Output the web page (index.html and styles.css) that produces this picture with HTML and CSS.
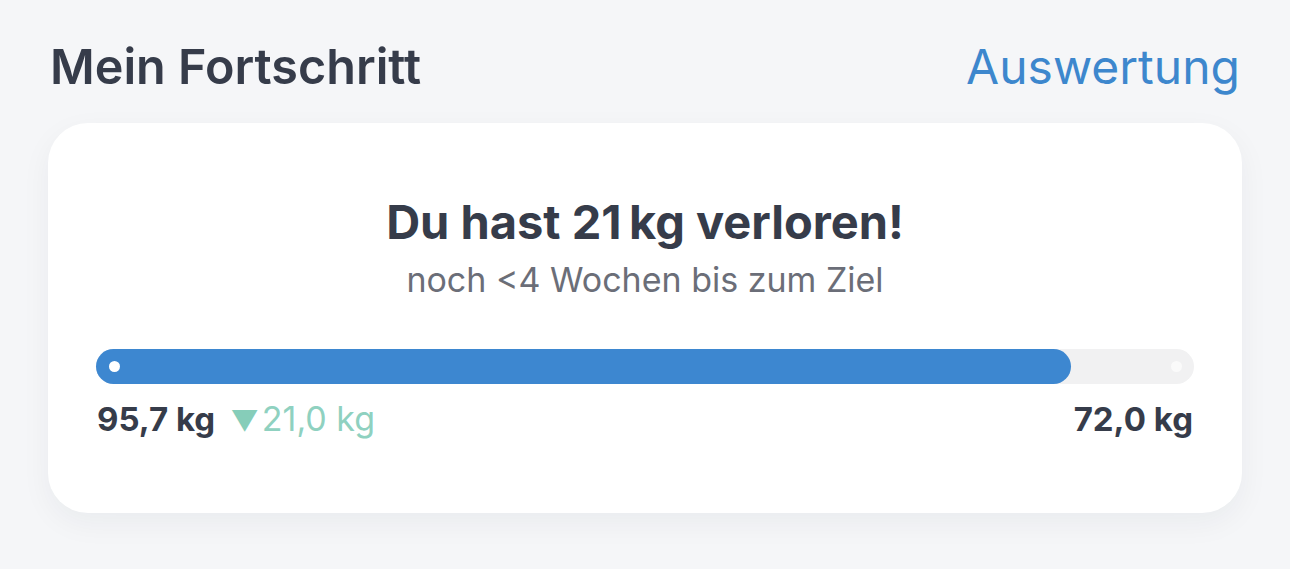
FILE: index.html
```html
<!DOCTYPE html>
<html lang="de">
<head>
  <meta charset="UTF-8">
  <meta name="viewport" content="width=device-width, initial-scale=1.0">
  <title>Mein Fortschritt</title>
  <link rel="stylesheet" href="styles.css">
</head>
<body>

  <div class="page">
    <div class="section-head">
      <h1>Mein Fortschritt</h1>
      <a class="link" href="#">Auswertung</a>
    </div>

    <div class="card">
      <h2>Du hast 21&#8239;kg verloren!</h2>
      <p class="subtitle">noch &lt;4 Wochen bis zum Ziel</p>

      <div class="progress">
        <div class="progress-fill" style="width: 88.8%;">
          <span class="dot"></span>
        </div>
        <span class="dot dot-end"></span>
      </div>

      <div class="labels">
        <div class="start">
          <strong>95,7 kg</strong>
          <span class="delta"><span class="tri">&#9660;</span>21,0 kg</span>
        </div>
        <strong>72,0 kg</strong>
      </div>
    </div>
  </div>

</body>
</html>
```

FILE: styles.css
```css
body {
  margin: 0;
  background: #f5f6f8;
  font-family: 'Inter', 'Open Sans', sans-serif;
  color: #363c4a;
}

.page {
  padding: 38px 48px 57px;
}

.section-head {
  display: flex;
  justify-content: space-between;
  align-items: center;
  padding: 0 2px;
}

h1 {
  margin: 0;
  font-size: 48.5px;
  line-height: 58px;
  font-weight: 600;
  color: #363c4a;
}

.link {
  font-size: 48px;
  line-height: 58px;
  color: #3d87cd;
  text-decoration: none;
}

.card {
  margin-top: 27px;
  background: white;
  border-radius: 40px;
  box-shadow: 0 10px 30px rgba(20, 30, 50, 0.05);
  padding: 71px 48px 70px;
  text-align: center;
}

h2 {
  margin: 0;
  font-size: 47px;
  line-height: 56px;
  font-weight: 700;
  color: #363c4a;
}

.subtitle {
  margin: 9px 0 0;
  font-size: 34px;
  line-height: 42px;
  color: #6b6e78;
}

.progress {
  position: relative;
  margin-top: 48px;
  height: 35px;
  border-radius: 18px;
  background: #f1f1f2;
}

.progress-fill {
  position: relative;
  height: 100%;
  border-radius: 18px;
  background: #3d87d0;
}

.dot {
  position: absolute;
  left: 13px;
  top: 12px;
  width: 11px;
  height: 11px;
  border-radius: 50%;
  background: white;
}

.dot-end {
  left: auto;
  right: 12px;
  background: #fafafa;
}

.labels {
  display: flex;
  justify-content: space-between;
  align-items: baseline;
  margin-top: 13px;
  font-size: 33px;
  line-height: 44px;
  padding: 0 1px;
}

.labels strong {
  font-weight: 700;
  color: #363c4a;
}

.delta {
  margin-left: 6px;
  font-size: 34px;
  color: #8fd1c0;
}

.tri {
  display: inline-block;
  font-size: 28px;
  margin-right: 3px;
  color: #86cdb9;
}
```
